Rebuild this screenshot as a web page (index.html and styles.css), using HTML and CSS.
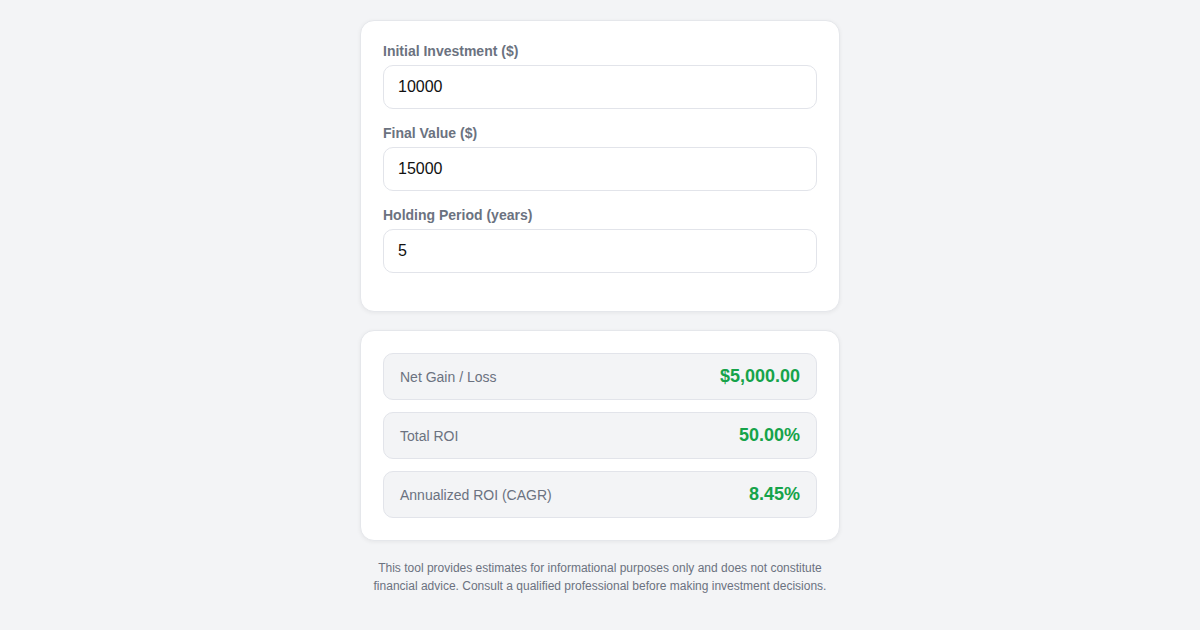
FILE: index.html
```html
<!DOCTYPE html>
<html>
<head>
<meta charset="utf-8">
<link rel="stylesheet" href="styles.css">
</head>
<body>
<main class="wrap">
  <section class="card">
    <div class="field">
      <label class="label">Initial Investment ($)</label>
      <input class="input" type="text" value="10000">
    </div>
    <div class="field">
      <label class="label">Final Value ($)</label>
      <input class="input" type="text" value="15000">
    </div>
    <div class="field">
      <label class="label">Holding Period (years)</label>
      <input class="input" type="text" value="5">
    </div>
  </section>
  <section class="card results">
    <div class="row"><span class="row-label">Net Gain / Loss</span><span class="row-value">$5,000.00</span></div>
    <div class="row"><span class="row-label">Total ROI</span><span class="row-value">50.00%</span></div>
    <div class="row"><span class="row-label">Annualized ROI (CAGR)</span><span class="row-value">8.45%</span></div>
  </section>
  <p class="disclaimer">This tool provides estimates for informational purposes only and does not constitute financial advice. Consult a qualified professional before making investment decisions.</p>
</main>
</body>
</html>
```

FILE: styles.css
```css
* { box-sizing: border-box; }
html, body { margin: 0; padding: 0; }
body {
  background: #f3f4f6;
  font-family: "Liberation Sans", Arial, sans-serif;
  color: #111827;
}
.wrap {
  width: 480px;
  margin: 0 auto;
  padding-top: 20px;
}
.card {
  background: #fff;
  border: 1px solid #e5e7eb;
  border-radius: 14px;
  box-shadow: 0 1px 4px rgba(0,0,0,0.06);
  padding: 22px 22px 22px;
  margin-bottom: 18px;
}
.field {
  margin-bottom: 16px;
}
.label {
  display: block;
  font-size: 14px;
  font-weight: 700;
  color: #6b7280;
  line-height: 16px;
  margin-bottom: 6px;
}
.input {
  display: block;
  width: 100%;
  height: 44px;
  border: 1px solid #e2e4ea;
  border-radius: 10px;
  padding: 0 14px;
  font-family: "Liberation Sans", Arial, sans-serif;
  font-size: 16px;
  color: #111;
  background: #fff;
  outline: none;
}
.results {
  padding: 22px;
  display: flex;
  flex-direction: column;
  gap: 12px;
}
.row {
  display: flex;
  justify-content: space-between;
  align-items: center;
  background: #f3f4f6;
  border: 1px solid #e2e4ea;
  border-radius: 10px;
  height: 47px;
  padding: 0 16px;
}
.row-label {
  font-size: 14px;
  color: #6b7280;
}
.row-value {
  font-size: 18px;
  font-weight: 700;
  color: #16a34a;
}
.disclaimer {
  margin: 16px 0 0;
  text-align: center;
  font-size: 12px;
  line-height: 18px;
  color: #6b7280;
}
```
